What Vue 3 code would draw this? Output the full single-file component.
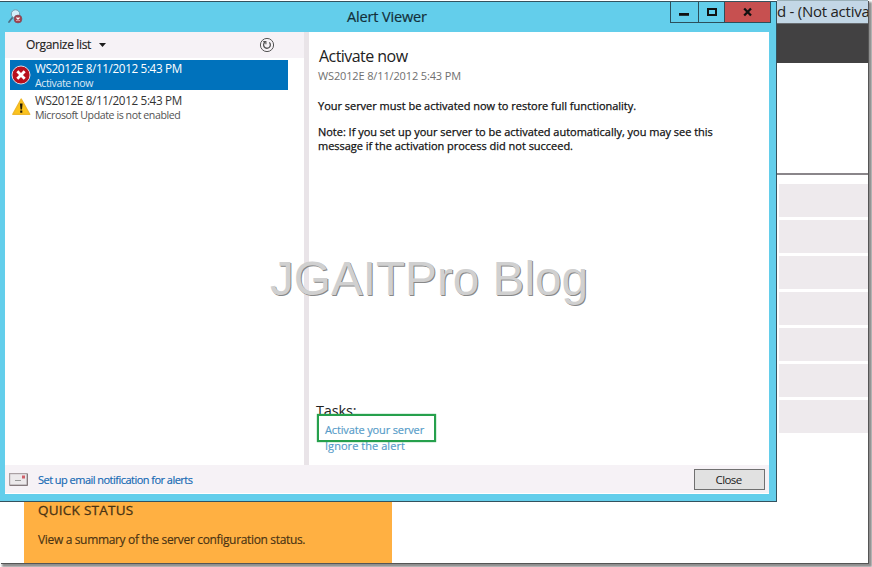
<script setup>
const alerts = [
  { level: 'error', source: 'WS2012E 8/11/2012 5:43 PM', title: 'Activate now', selected: true },
  { level: 'warning', source: 'WS2012E 8/11/2012 5:43 PM', title: 'Microsoft Update is not enabled', selected: false },
]
</script>

<template>
  <div class="screen">
    <div class="desktop">
      <div class="back-window">
        <div class="back-title">d - (Not activa</div>
        <div class="back-nav"></div>
        <div class="back-head"></div>
        <div class="back-rows">
          <div v-for="n in 7" :key="n" class="back-row"></div>
        </div>
      </div>

      <section class="status">
        <h2>QUICK STATUS</h2>
        <p>View a summary of the server configuration status.</p>
      </section>

      <div class="viewer">
        <header class="titlebar">
          <svg class="app-icon" width="16" height="16" viewBox="0 0 16 16">
            <path d="M2 13 L5.5 8.5" stroke="#4d6f85" stroke-width="1.8" stroke-linecap="round" />
            <circle cx="8.5" cy="5" r="4.2" fill="#d3eefa" stroke="#7598ab" stroke-width="1" />
            <circle cx="11" cy="10" r="3.9" fill="#a8404c" stroke="#7b5260" stroke-width=".8" />
            <path d="M9.5 8.5 l3 3 M12.5 8.5 l-3 3" stroke="#fff" stroke-width="1.2" />
          </svg>
          <h1>Alert Viewer</h1>
          <div class="controls">
            <span class="ctl"><svg width="28" height="21" viewBox="0 0 28 21"><path d="M8 12.4h10" stroke="#111" stroke-width="2.8" /></svg></span>
            <span class="ctl max"><svg width="25" height="21" viewBox="0 0 25 21"><rect x="9" y="7" width="8" height="6" fill="none" stroke="#111" stroke-width="2" /></svg></span>
            <span class="ctl close"><svg width="46" height="21" viewBox="0 0 46 21"><path d="M19.2 6.5l6.8 7M26 6.5l-6.8 7" stroke="#111" stroke-width="2.3" /></svg></span>
          </div>
        </header>

        <div class="body">
          <div class="panes">
            <aside class="list">
              <div class="toolbar">
                <span class="organize">Organize list</span>
                <svg class="caret" width="7" height="4" viewBox="0 0 7 4"><path d="M0 0h7L3.5 4z" fill="#1c1c1c" /></svg>
                <svg class="refresh" width="16" height="16" viewBox="0 0 16 16" fill="none" stroke="#555">
                  <circle cx="8" cy="8" r="6.6" stroke-width="1" />
                  <path d="M6 5.1 A3.4 3.4 0 1 0 10.3 5.4" stroke-width="1.3" />
                  <path d="M4.2 4.6 H6.9 V7.3" stroke-width="1.1" />
                </svg>
              </div>
              <div v-for="a in alerts" :key="a.title" class="alert" :class="{ selected: a.selected }">
                <svg v-if="a.level === 'error'" width="20" height="20" viewBox="0 0 20 20">
                  <circle cx="10" cy="10" r="9" fill="#b80f1d" stroke="#e3d7df" stroke-width="1" />
                  <path d="M6.3 6.3l7.4 7.4M13.7 6.3l-7.4 7.4" stroke="#fff" stroke-width="2.8" />
                </svg>
                <svg v-else width="20" height="20" viewBox="0 0 20 20">
                  <path d="M10.2 2 L18.7 17.3 H1.8 Z" fill="#fcc41c" stroke="#efb82c" stroke-width="1.4" stroke-linejoin="round" />
                  <path d="M8.9 6.6h2.7l-.6 6h-1.5z M9.2 13.6h2.1v2.1h-2.1z" fill="#241c08" />
                </svg>
                <div class="alert-text">
                  <div class="source">{{ a.source }}</div>
                  <div class="title">{{ a.title }}</div>
                </div>
              </div>
            </aside>
            <main class="detail">
              <h2>Activate now</h2>
              <div class="when">WS2012E 8/11/2012 5:43 PM</div>
              <p>Your server must be activated now to restore full functionality.</p>
              <p>Note: If you set up your server to be activated automatically, you may see this<br />message if the activation process did not succeed.</p>
              <div class="tasks">
                <h3>Tasks:</h3>
                <a>Activate your server</a>
                <a>Ignore the alert</a>
                <div class="highlight"></div>
              </div>
            </main>
          </div>
          <footer class="footer">
            <svg width="19" height="13" viewBox="0 0 19 13">
              <rect x=".6" y=".6" width="17.6" height="11.6" fill="#ece9eb" stroke="#aaa0a3" stroke-width="1.2" />
              <path d="M1 12.4h17.4V1" fill="none" stroke="#7f7477" stroke-width="1" />
              <path d="M6 7.5h6" stroke="#999" stroke-width="1" />
              <rect x="13" y="2.5" width="3" height="3" fill="#d0606a" />
            </svg>
            <a>Set up email notification for alerts</a>
            <button>Close</button>
          </footer>
        </div>
      </div>

      <div class="watermark">JGAITPro Blog</div>
    </div>
  </div>
</template>

<style>
body {
  background: #fff;
  overflow: hidden;
}
</style>

<style scoped>
.screen {
  width: 872px;
  height: 567px;
  overflow: hidden;
  background: #fff;
  font-family: "Open Sans", "Noto Sans", sans-serif;
  color: #222;
}
.screen * {
  box-sizing: border-box;
  margin: 0;
  font-weight: 400;
  white-space: nowrap;
}
.desktop {
  position: relative;
  width: 868px;
  height: 563px;
  background: #fff;
  box-shadow: 1px 1px 0 #555, 3px 3px 2px 1px #8e8e8e;
}
.back-window {
  position: absolute;
  left: 777px;
  top: 0;
  width: 91px;
  overflow: hidden;
}
.back-title {
  height: 23px;
  border-top: 1px solid #9ab0b8;
  background: #c3d7e6;
  font-size: 15px;
  line-height: 21px;
  letter-spacing: -0.25px;
  color: #222;
}
.back-nav {
  height: 40px;
  background: #424142;
  border-top: 1px solid #686c70;
}
.back-head {
  height: 112px;
  border-bottom: 2px solid #8a868a;
}
.back-rows {
  display: flex;
  flex-direction: column;
  gap: 3px;
  padding: 9px 0 0 2px;
}
.back-row {
  height: 33px;
  background: #eeeaed;
}
.status {
  position: absolute;
  left: 24px;
  top: 498px;
  width: 368px;
  height: 65px;
  padding: 2px 14px 0;
  background: #ffb042;
  color: #493314;
}
.status h2 {
  font-size: 13.5px;
  line-height: 20px;
  letter-spacing: 0.25px;
  -webkit-text-stroke: 0.3px #493314;
}
.status p {
  margin-top: 10px;
  font-size: 12px;
  line-height: 19px;
  letter-spacing: -0.34px;
  -webkit-text-stroke: 0.15px #493314;
}
.viewer {
  position: absolute;
  left: 0;
  top: 1px;
  width: 777px;
  height: 501px;
  display: flex;
  flex-direction: column;
  padding: 0 7px 7px 5px;
  background: #63ceeb;
  border: solid #34525e;
  border-width: 1px 1px 1px 0;
}
.titlebar {
  display: flex;
  height: 30px;
  flex: none;
}
.app-icon {
  margin: 7px 0 0 2px;
}
.titlebar h1 {
  margin-left: 324px;
  font-size: 14.5px;
  line-height: 29px;
  letter-spacing: -0.15px;
  color: #14303a;
  -webkit-text-stroke: 0.2px #14303a;
}
.controls {
  display: flex;
  height: 21px;
  margin: 0 -2px 0 auto;
  border: 1px solid #2c4f5b;
  border-top: 0;
}
.ctl {
  display: flex;
  width: 28px;
  height: 20px;
  border-right: 1px solid #2c4f5b;
}
.ctl.max {
  width: 26px;
}
.ctl.close {
  width: 45px;
  border: 0;
  background: #c75050;
}
.ctl svg {
  flex: none;
}
.body {
  display: flex;
  flex-direction: column;
  flex: 1;
  background: #fff;
}
.panes {
  display: flex;
  height: 433px;
}
.list {
  width: 304px;
  border-right: 5px solid #e9e4e8;
}
.toolbar {
  display: flex;
  align-items: center;
  height: 26px;
  margin-bottom: 2px;
  padding-left: 21px;
  background: #f6f2f6;
}
.organize {
  width: 73px;
  font-size: 12px;
  line-height: 16px;
  letter-spacing: -0.33px;
  -webkit-text-stroke: 0.15px #222;
}
.refresh {
  margin: 0 0 1px 153px;
}
.alert {
  display: flex;
  width: 278px;
  height: 30px;
  margin: 0 0 2px 5px;
  padding: 0 0 0 1px;
  color: #333;
}
.alert svg {
  margin: 5px 4px 0 0;
}
.alert.selected {
  background: #0072bc;
  color: #fff;
}
.source {
  font-size: 11.7px;
  line-height: 17px;
  letter-spacing: -0.35px;
}
.title {
  font-size: 10.6px;
  line-height: 13px;
  letter-spacing: -0.42px;
  opacity: 0.85;
}
.detail {
  position: relative;
  flex: 1;
  padding: 14px 0 0 9px;
}
.detail h2 {
  padding-left: 1px;
  font-size: 16px;
  line-height: 21px;
  letter-spacing: -0.55px;
}
.when {
  font-size: 11px;
  line-height: 18px;
  letter-spacing: -0.14px;
  color: #707070;
}
.detail p {
  margin-top: 12px;
  font-size: 11px;
  line-height: 14px;
  letter-spacing: -0.02px;
  color: #111;
  -webkit-text-stroke: 0.25px #111;
}
.when + p {
  margin-top: 14px;
}
.tasks {
  position: absolute;
  left: 7px;
  top: 368px;
  display: flex;
  flex-direction: column;
}
.tasks h3 {
  height: 22px;
  font-size: 14.5px;
  line-height: 21px;
  letter-spacing: -0.15px;
}
.tasks a {
  padding-left: 9px;
  font-size: 11px;
  line-height: 16px;
  letter-spacing: -0.14px;
  color: #559bc8;
  -webkit-text-stroke: 0.15px #559bc8;
}
.tasks a + a {
  letter-spacing: 0.05px;
}
.highlight {
  position: absolute;
  left: 1px;
  top: 14px;
  width: 119px;
  height: 28px;
  border: 2px solid #26a04c;
  box-shadow: 0 0 1px #26a04c;
}
.footer {
  display: flex;
  align-items: center;
  height: 28px;
  padding: 0 4px;
  background: #f6f2f6;
}
.footer a {
  margin-left: 10px;
  font-size: 11px;
  letter-spacing: -0.53px;
  color: #1268b3;
  -webkit-text-stroke: 0.15px #1268b3;
}
.footer button {
  width: 71px;
  height: 21px;
  margin-left: auto;
  padding: 1px 2px 0 0;
  border: 1px solid #707070;
  background: #e1e1e1;
  font: 11.5px/18px "Open Sans", sans-serif;
  letter-spacing: -0.6px;
  color: #222;
}
.watermark {
  position: absolute;
  left: 270px;
  top: 252px;
  font: 47.7px/54px "Liberation Sans", sans-serif;
  color: #d0d0d0;
  text-shadow: 1px 1px 0 #888;
}
</style>
